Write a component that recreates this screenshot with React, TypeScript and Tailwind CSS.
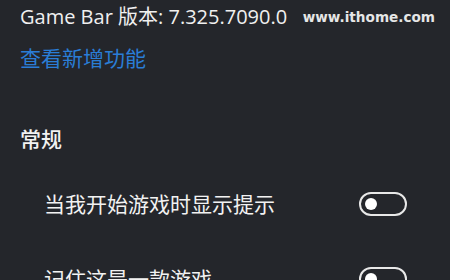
import React from 'react';

const Toggle: React.FC = () => (
  <div className="flex h-[24px] w-[48px] items-center rounded-full border-2 border-[#e8e8e8] px-[4px]">
    <div className="h-[12px] w-[12px] rounded-full bg-white" />
  </div>
);

const SettingRow: React.FC<{ label: string }> = ({ label }) => (
  <div className="flex items-center justify-between pl-[44px] pr-[43px]">
    <span className="text-[21px] leading-[28px] text-[#f2f2f2]">{label}</span>
    <Toggle />
  </div>
);

export default function App() {
  return (
    <div
      className="relative h-[280px] w-[450px] overflow-hidden bg-[#24262b]"
      style={{ fontFamily: '"Open Sans", "Noto Sans CJK SC", sans-serif' }}
    >
      <div className="flex flex-col pt-[3px]">
        <div className="flex items-center pl-[20px]">
          <span className="text-[20px] leading-[28px] text-[#f0f0f0]">Game Bar 版本: 7.325.7090.0</span>
          <span
            className="ml-auto mr-[15px] text-[13.6px] font-bold leading-[28px] text-[#e6e6e6]"
            style={{ fontFamily: '"DejaVu Sans", sans-serif' }}
          >
            www.ithome.com
          </span>
        </div>
        <a className="mt-[13px] pl-[20px] text-[21px] leading-[28px] text-[#2a7dd6]">查看新增功能</a>
        <div className="mt-[53px] pl-[20px] text-[21px] font-medium leading-[28px] text-[#f2f2f2]">常规</div>
        <div className="mt-[37px]">
          <SettingRow label="当我开始游戏时显示提示" />
        </div>
        <div className="mt-[47px]">
          <SettingRow label="记住这是一款游戏" />
        </div>
      </div>
    </div>
  );
}
